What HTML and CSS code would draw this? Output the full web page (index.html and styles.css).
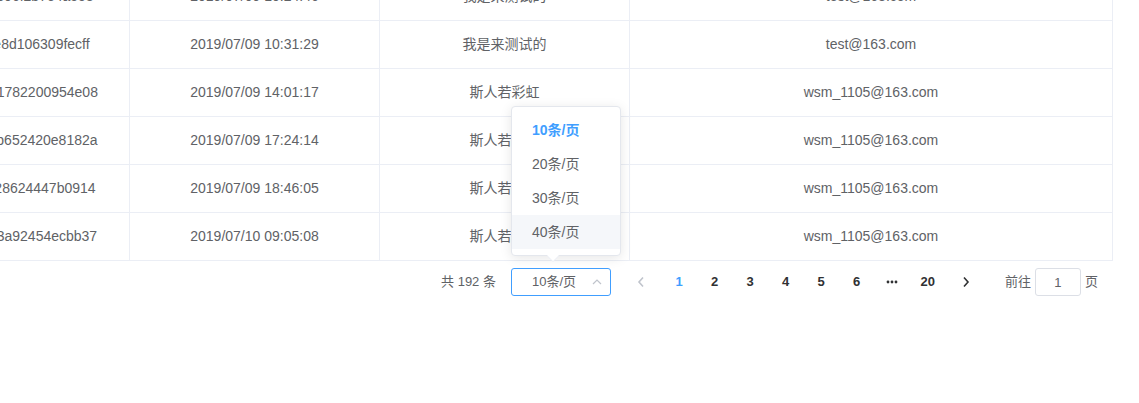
FILE: index.html
```html
<!DOCTYPE html>
<html lang="zh-CN">

<head>
    <meta charset="UTF-8">
    <meta name="viewport" content="width=device-width, initial-scale=1.0">
    <title>用户列表</title>
    <link rel="stylesheet" href="styles.css">
</head>

<body>
    <div class="page">
        <div class="table">
            <div class="row">
                <div class="cell">5d23fa1e4c8b06f2b7e4a553</div>
                <div class="cell">2019/07/09 10:24:46</div>
                <div class="cell">我是来测试的</div>
                <div class="cell">test@163.com</div>
            </div>
            <div class="row">
                <div class="cell">5d23fb6a25e8d106309fecff</div>
                <div class="cell">2019/07/09 10:31:29</div>
                <div class="cell">我是来测试的</div>
                <div class="cell">test@163.com</div>
            </div>
            <div class="row">
                <div class="cell">5d242a59d221782200954e08</div>
                <div class="cell">2019/07/09 14:01:17</div>
                <div class="cell">斯人若彩虹</div>
                <div class="cell">wsm_1105@163.com</div>
            </div>
            <div class="row">
                <div class="cell">5d245cd6e40b652420e8182a</div>
                <div class="cell">2019/07/09 17:24:14</div>
                <div class="cell">斯人若彩虹</div>
                <div class="cell">wsm_1105@163.com</div>
            </div>
            <div class="row">
                <div class="cell">5d246f0d1dc28624447b0914</div>
                <div class="cell">2019/07/09 18:46:05</div>
                <div class="cell">斯人若彩虹</div>
                <div class="cell">wsm_1105@163.com</div>
            </div>
            <div class="row">
                <div class="cell">5d24e8bc2ee3a92454ecbb37</div>
                <div class="cell">2019/07/10 09:05:08</div>
                <div class="cell">斯人若彩虹</div>
                <div class="cell">wsm_1105@163.com</div>
            </div>
        </div>

        <div class="pagination">
            <span class="total">共 192 条</span>
            <div class="sizes">
                <div class="select">
                    <span>10条/页</span>
                    <svg class="select-arrow" width="10" height="6" viewBox="0 0 10 6">
                        <polyline points="1,5 5,1 9,5" fill="none" stroke="#c0c4cc" stroke-width="1.2" />
                    </svg>
                </div>
                <!-- size dropdown (open) -->
                <div class="dropdown">
                    <ul class="dropdown-list">
                        <li class="dropdown-item selected">10条/页</li>
                        <li class="dropdown-item">20条/页</li>
                        <li class="dropdown-item">30条/页</li>
                        <li class="dropdown-item hover">40条/页</li>
                    </ul>
                    <div class="dropdown-arrow"></div>
                </div>
            </div>
            <button class="btn-prev" disabled>
                <svg width="8" height="12" viewBox="0 0 8 12">
                    <polyline points="6,1.5 2,6 6,10.5" fill="none" stroke="#c0c4cc" stroke-width="1.6" />
                </svg>
            </button>
            <ul class="pager">
                <li class="active">1</li>
                <li>2</li>
                <li>3</li>
                <li>4</li>
                <li>5</li>
                <li>6</li>
                <li>
                    <svg width="12" height="4" viewBox="0 0 12 4">
                        <circle cx="2" cy="2" r="1.4" fill="#303133" />
                        <circle cx="6" cy="2" r="1.4" fill="#303133" />
                        <circle cx="10" cy="2" r="1.4" fill="#303133" />
                    </svg>
                </li>
                <li>20</li>
            </ul>
            <button class="btn-next">
                <svg width="8" height="12" viewBox="0 0 8 12">
                    <polyline points="2,1.5 6,6 2,10.5" fill="none" stroke="#303133" stroke-width="1.6" />
                </svg>
            </button>
            <span class="jump">
                前往
                <input class="jump-input" type="text" value="1">
                页
            </span>
        </div>
    </div>
</body>

</html>
```

FILE: styles.css
```css
body {
    margin: 0;
    padding: 0;
    font-family: "Liberation Sans", "Noto Sans CJK SC", sans-serif;
    color: #606266;
    background-color: #fff;
    overflow: hidden;
}

.page {
    width: 1139px;
    height: 403px;
    overflow: hidden;
}

/* table (scrolled, so first row is cut) */
.table {
    width: 1233px;
    margin-left: -120px;
    margin-top: -27px;
}

.row {
    display: grid;
    grid-template-columns: 250px 250px 250px 483px;
}

.cell {
    box-sizing: border-box;
    height: 48px;
    line-height: 47px;
    font-size: 14px;
    text-align: center;
    white-space: nowrap;
    overflow: hidden;
    border-right: 1px solid #ebeef5;
    border-bottom: 1px solid #ebeef5;
}

/* pagination */
.pagination {
    display: flex;
    align-items: center;
    justify-content: flex-end;
    margin-top: 5px;
    padding: 2px 41px 2px 5px;
    height: 28px;
    font-size: 13px;
    color: #606266;
}

.total {
    margin-right: 15px;
    line-height: 28px;
}

.sizes {
    position: relative;
    margin-right: 15px;
}

.select {
    box-sizing: border-box;
    width: 100px;
    height: 28px;
    line-height: 26px;
    padding-left: 20px;
    border: 1px solid #409eff;
    border-radius: 3px;
    position: relative;
}

.select-arrow {
    position: absolute;
    right: 8px;
    top: 10px;
}

.dropdown {
    position: absolute;
    left: 0;
    bottom: 40px;
    box-sizing: border-box;
    width: 110px;
    background-color: #fff;
    border: 1px solid #e4e7ed;
    border-radius: 4px;
    box-shadow: 0 2px 12px 0 rgba(0, 0, 0, 0.1);
    z-index: 10;
}

.dropdown-list {
    list-style: none;
    margin: 0;
    padding: 6px 0;
}

.dropdown-item {
    height: 34px;
    line-height: 34px;
    padding: 0 20px;
    font-size: 14px;
    color: #606266;
    white-space: nowrap;
}

.dropdown-item.selected {
    color: #409eff;
    font-weight: bold;
}

.dropdown-item.hover {
    background-color: #f5f7fa;
}

.dropdown-arrow {
    position: absolute;
    left: 35px;
    bottom: -7px;
    width: 0;
    height: 0;
    border-left: 6px solid transparent;
    border-right: 6px solid transparent;
    border-top: 6px solid #ebeef5;
}

.dropdown-arrow::after {
    content: "";
    position: absolute;
    left: -6px;
    top: -7px;
    border-left: 6px solid transparent;
    border-right: 6px solid transparent;
    border-top: 6px solid #fff;
}

.btn-prev,
.btn-next {
    box-sizing: border-box;
    width: 35.5px;
    height: 28px;
    margin: 0;
    border: none;
    background: none;
    display: flex;
    align-items: center;
    justify-content: center;
    cursor: pointer;
}

.btn-prev {
    padding: 0 12px 0 6px;
    cursor: not-allowed;
}

.btn-next {
    padding: 0 6px 0 12px;
}

.pager {
    display: flex;
    list-style: none;
    margin: 0;
    padding: 0;
}

.pager li {
    width: 35.5px;
    height: 28px;
    line-height: 28px;
    text-align: center;
    font-size: 13px;
    font-weight: bold;
    color: #303133;
    display: flex;
    align-items: center;
    justify-content: center;
}

.pager li.active {
    color: #409eff;
}

.jump {
    display: flex;
    align-items: center;
    margin-left: 24px;
    line-height: 28px;
}

.jump-input {
    box-sizing: border-box;
    width: 46px;
    height: 28px;
    margin: 0 4px;
    padding: 0 2px;
    border: 1px solid #dcdfe6;
    border-radius: 3px;
    text-align: center;
    font-family: inherit;
    font-size: 13px;
    color: #606266;
    outline: none;
}
```
